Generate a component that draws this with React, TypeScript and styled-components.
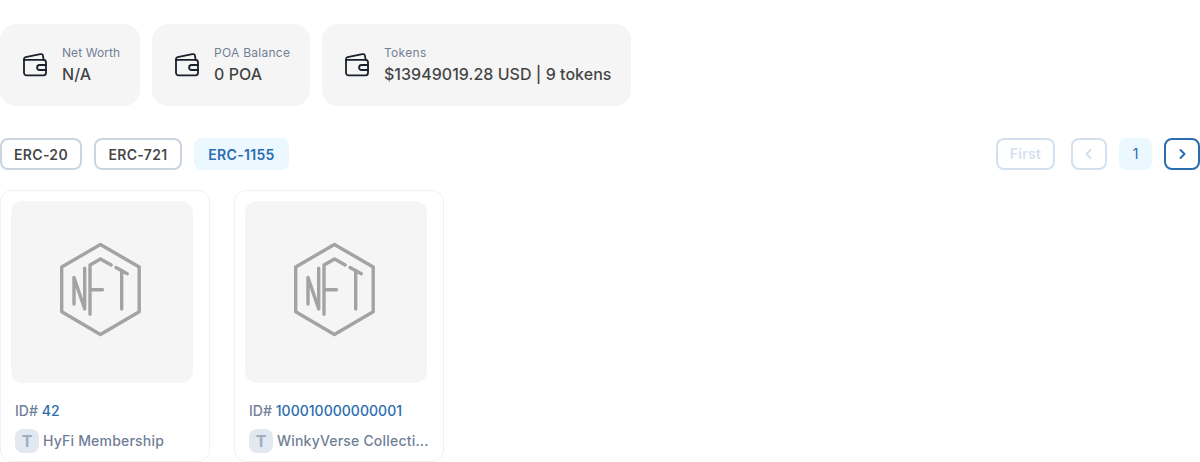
import React from "react";
import styled, { createGlobalStyle, css } from "styled-components";

const GlobalStyle = createGlobalStyle`
  *, *::before, *::after { box-sizing: border-box; }
  body {
    margin: 0;
    background: #fff;
    font-family: Inter, "Liberation Sans", sans-serif;
    color: rgba(16, 17, 18, 0.8);
    overflow: hidden;
  }
  button { font-family: inherit; margin: 0; }
`;

const Page = styled.main`
  padding-top: 24px;
`;

const Stats = styled.section`
  display: flex;
  gap: 12px;
`;

const StatCard = styled.div<{ $width: number }>`
  display: flex;
  align-items: center;
  gap: 12px;
  width: ${(p) => p.$width}px;
  height: 82px;
  padding: 20px;
  border-radius: 16px;
  background: #f5f5f5;
  white-space: nowrap;
`;

const StatIcon = styled.svg`
  flex: none;
  width: 30px;
  height: 30px;
  fill: none;
  stroke: #1a202c;
  stroke-width: 1.8;
  stroke-linecap: round;
  stroke-linejoin: round;
`;

const StatLabel = styled.div<{ $tracking: number }>`
  padding-top: 1px;
  margin-bottom: 1px;
  font-size: 12px;
  line-height: 16px;
  letter-spacing: ${(p) => p.$tracking}px;
  color: #718096;
`;

const StatValue = styled.div`
  font-size: 16px;
  font-weight: 500;
  line-height: 24px;
  letter-spacing: 0.03px;
`;

const Toolbar = styled.div`
  display: flex;
  justify-content: space-between;
  margin-top: 32px;
`;

const Tabs = styled.div`
  display: flex;
  gap: 12px;
`;

const Tab = styled.button<{ $active?: boolean; $width: number }>`
  width: ${(p) => p.$width}px;
  height: 32px;
  padding: 2px 0 0;
  border: 2px solid #cbd5e0;
  border-radius: 8px;
  background: transparent;
  color: rgba(16, 17, 18, 0.8);
  font-size: 14px;
  font-weight: 600;
  line-height: 20px;
  letter-spacing: 0.3px;
  ${(p) =>
    p.$active &&
    css`
      border-color: #ebf8ff;
      background: #ebf8ff;
      color: #2b6cb0;
    `}
`;

const Pager = styled.nav`
  display: flex;
  gap: 12px;
`;

const PagerButton = styled.button<{ $width: number; $disabled?: boolean }>`
  display: flex;
  align-items: center;
  justify-content: center;
  width: ${(p) => p.$width}px;
  height: 32px;
  padding: 0;
  border: 2px solid #2b6cb0;
  border-radius: 8px;
  background: transparent;
  color: #2b6cb0;
  font-size: 14px;
  font-weight: 600;
  opacity: ${(p) => (p.$disabled ? 0.2 : 1)};
`;

const FirstButton = styled(PagerButton)`
  margin-right: 4px;
  padding-bottom: 1px;
  letter-spacing: 0.3px;
`;

const CurrentPage = styled.span`
  width: 33px;
  height: 32px;
  border-radius: 8px;
  background: #ebf8ff;
  color: #2b6cb0;
  font-size: 14px;
  line-height: 32px;
  text-align: center;
`;

const Chevron = styled.svg`
  width: 12px;
  height: 12px;
  fill: none;
  stroke: currentColor;
  stroke-width: 2;
  stroke-linecap: round;
  stroke-linejoin: round;
`;

const Cards = styled.section`
  display: flex;
  gap: 24px;
  margin-top: 20px;
`;

const Card = styled.article`
  width: 210px;
  height: 272px;
  padding: 10px;
  border: 1px solid rgba(16, 17, 18, 0.06);
  border-radius: 12px;
  font-size: 14px;
  font-weight: 500;
  line-height: 20px;
  color: #718096;
`;

const Media = styled.div`
  width: 182px;
  height: 182px;
  border-radius: 12px;
  background: #f5f5f5;
`;

const Placeholder = styled.svg`
  display: block;
  fill: none;
  stroke: #a3a3a3;
  stroke-width: 3.4;
  stroke-linecap: round;
  stroke-linejoin: round;
`;

const CardId = styled.div`
  margin: 18px 4px 0;
  letter-spacing: 0.03px;
  white-space: nowrap;
`;

const IdLink = styled.span`
  color: #2b6cb0;
`;

const TokenRow = styled.div`
  display: flex;
  align-items: center;
  gap: 4px;
  margin: 8px 0 0 4px;
`;

const TokenBadge = styled.span`
  flex: none;
  width: 24px;
  height: 24px;
  border-radius: 8px;
  background: #e2e8f0;
  color: #a0aec0;
  font-size: 16px;
  font-weight: 700;
  line-height: 24px;
  text-align: center;
`;

const TokenName = styled.span`
  letter-spacing: 0.2px;
  white-space: nowrap;
`;

const stats = [
  { label: "Net Worth", value: "N/A", width: 140, tracking: 0.08 },
  { label: "POA Balance", value: "0 POA", width: 158, tracking: 0.27 },
  { label: "Tokens", value: "$13949019.28 USD | 9 tokens", width: 309, tracking: 0.3 },
];

const tabs = [
  { label: "ERC-20", width: 82 },
  { label: "ERC-721", width: 88 },
  { label: "ERC-1155", width: 95, active: true },
];

const tokens = [
  { id: "42", name: "HyFi Membership" },
  { id: "100010000000001", name: "WinkyVerse Collecti..." },
];

function WalletIcon() {
  return (
    <StatIcon viewBox="0 0 30 30">
      <path d="M4 10v12.700a2.600 2.600 0 0 0 2.600 2.600h16.800a2.600 2.600 0 0 0 2.600-2.600V12.500a2.600 2.600 0 0 0-2.300-2.600H4.400" />
      <path d="M4 10.500V9c0-1 .6-1.600 1.600-1.800l14.700-3.100c1.500-.3 2.400.4 2.600 1.500l.8 4.200" />
      <path d="M26 15h-6.400a2.500 2.500 0 0 0 0 5H26" />
    </StatIcon>
  );
}

function NftPlaceholder() {
  return (
    <Placeholder width="182" height="182" viewBox="0 0 182 182">
      <path d="M89.400 43.500 128.200 66v44.700L89.400 133.500 50.700 110.700V66Z" />
      <path d="M63 103V76.500L73.700 108V67.300" />
      <path d="M79 113.300V64l10.500-6 10.700 6M79 88.700h12.500" />
      <path d="m105 66.500 11.300 6.200M110.700 69.500V108" />
    </Placeholder>
  );
}

export default function App() {
  return (
    <>
      <GlobalStyle />
      <Page>
        <Stats>
          {stats.map((s) => (
            <StatCard key={s.label} $width={s.width}>
              <WalletIcon />
              <div>
                <StatLabel $tracking={s.tracking}>{s.label}</StatLabel>
                <StatValue>{s.value}</StatValue>
              </div>
            </StatCard>
          ))}
        </Stats>
        <Toolbar>
          <Tabs>
            {tabs.map((t) => (
              <Tab key={t.label} $width={t.width} $active={t.active}>
                {t.label}
              </Tab>
            ))}
          </Tabs>
          <Pager>
            <FirstButton $width={59} $disabled>
              First
            </FirstButton>
            <PagerButton $width={36} $disabled aria-label="Previous page">
              <Chevron viewBox="0 0 12 12">
                <path d="M7.500 2 3.500 6l4 4" />
              </Chevron>
            </PagerButton>
            <CurrentPage>1</CurrentPage>
            <PagerButton $width={36} aria-label="Next page">
              <Chevron viewBox="0 0 12 12">
                <path d="m4.500 2 4 4-4 4" />
              </Chevron>
            </PagerButton>
          </Pager>
        </Toolbar>
        <Cards>
          {tokens.map((t) => (
            <Card key={t.id}>
              <Media>
                <NftPlaceholder />
              </Media>
              <CardId>
                ID# <IdLink>{t.id}</IdLink>
              </CardId>
              <TokenRow>
                <TokenBadge>T</TokenBadge>
                <TokenName>{t.name}</TokenName>
              </TokenRow>
            </Card>
          ))}
        </Cards>
      </Page>
    </>
  );
}
